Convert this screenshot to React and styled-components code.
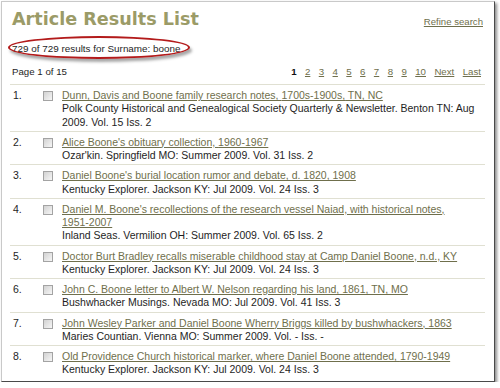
import React from 'react';
import styled, { createGlobalStyle } from 'styled-components';

const GlobalStyle = createGlobalStyle`
  body {
    margin: 0;
    background: #fff;
    font-family: 'Liberation Sans', Arial, sans-serif;
  }
`;

const Frame = styled.div`
  margin: 1px 0 0 1px;
  height: 379px;
  width: 475px;
  padding: 0 9px 0 8px;
  border: 1px solid #c9c9c9;
  border-right-color: #4a4a4a;
  border-bottom-color: #4a4a4a;
  box-shadow: 2px 2px 3px rgba(0, 0, 0, 0.45);
  background: #fff;
  overflow: hidden;
  color: #1e1e1e;
  font-size: 9.7px;
`;

const Header = styled.div`
  display: flex;
  justify-content: space-between;
  align-items: center;
  padding: 6px 2px 0 2px;
`;

const Title = styled.h1`
  margin: 0;
  font-family: 'DejaVu Sans', Verdana, sans-serif;
  font-weight: bold;
  font-size: 17.6px;
  line-height: 22px;
  color: #9b9b67;
`;

const Link = styled.a`
  color: #6f6f4c;
  text-decoration: underline;
  cursor: pointer;
`;

const RefineLink = styled(Link)`
  padding-top: 4px;
  font-size: 9.6px;
`;

const Summary = styled.div`
  position: relative;
  margin: 12px 0 0 2px;
  line-height: 13px;
  font-size: 9.9px;
`;

const Ellipse = styled.span`
  position: absolute;
  left: -4px;
  top: -6px;
  width: 178px;
  height: 19px;
  border: 2px solid #b31b1b;
  border-radius: 50%;
  box-shadow: 2px 3px 3px rgba(0, 0, 0, 0.35);
  pointer-events: none;
`;

const PagerRow = styled.div`
  display: flex;
  justify-content: space-between;
  align-items: center;
  margin-top: 10px;
  padding: 0 4px 0 2px;
  line-height: 13px;
  height: 13px;
`;

const Pages = styled.div`
  display: flex;
  gap: 8.4px;
`;

const Current = styled.span`
  font-weight: bold;
  color: #111;
`;

const List = styled.ol`
  list-style: none;
  margin: 6px 0 0;
  padding: 0;
  font-size: 10.5px;
`;

const Row = styled.li`
  display: grid;
  grid-template-columns: 33px 19px 1fr;
  border-top: 1px solid #e0e0d2;
  padding: 4px 0 2px;
  line-height: 13.25px;
`;

const Num = styled.span`
  padding-left: 3px;
`;

const Check = styled.span`
  width: 8px;
  height: 8px;
  margin-top: 2px;
  border: 1px solid #a3a3a3;
  background: linear-gradient(135deg, #d2d2d2, #f6f6f6);
`;

const Body = styled.div``;

const NoBreak = styled.span`
  white-space: nowrap;
`;

const results = [
  ['Dunn, Davis and Boone family research notes, 1700s-1900s, TN, NC', 'Polk County Historical and Genealogical Society Quarterly & Newsletter. Benton TN: Aug 2009. Vol. 15 Iss. 2'],
  ["Alice Boone's obituary collection, 1960-1967", "Ozar'kin. Springfield MO: Summer 2009. Vol. 31 Iss. 2"],
  ["Daniel Boone's burial location rumor and debate, d. 1820, 1908", 'Kentucky Explorer. Jackson KY: Jul 2009. Vol. 24 Iss. 3'],
  ["Daniel M. Boone's recollections of the research vessel Naiad, with historical notes, 1951-2007", 'Inland Seas. Vermilion OH: Summer 2009. Vol. 65 Iss. 2'],
  ['Doctor Burt Bradley recalls miserable childhood stay at Camp Daniel Boone, n.d., KY', 'Kentucky Explorer. Jackson KY: Jul 2009. Vol. 24 Iss. 3'],
  ['John C. Boone letter to Albert W. Nelson regarding his land, 1861, TN, MO', 'Bushwhacker Musings. Nevada MO: Jul 2009. Vol. 41 Iss. 3'],
  ['John Wesley Parker and Daniel Boone Wherry Briggs killed by bushwhackers, 1863', 'Maries Countian. Vienna MO: Summer 2009. Vol. - Iss. -'],
  ['Old Providence Church historical marker, where Daniel Boone attended, 1790-1949', 'Kentucky Explorer. Jackson KY: Jul 2009. Vol. 24 Iss. 3'],
];

const pageLinks = ['2', '3', '4', '5', '6', '7', '8', '9', '10', 'Next', 'Last'];

// keep year ranges like 1951-2007 on one line
const keepRanges = (text) =>
  text.split(/(\S+-\S+)/).map((part, i) =>
    i % 2 ? <NoBreak key={i}>{part}</NoBreak> : part
  );

export default function App() {
  return (
    <>
      <GlobalStyle />
      <Frame>
        <Header>
          <Title>Article Results List</Title>
          <RefineLink>Refine search</RefineLink>
        </Header>
        <Summary>
          729 of 729 results for Surname: boone
          <Ellipse />
        </Summary>
        <PagerRow>
          <span>Page 1 of 15</span>
          <Pages>
            <Current>1</Current>
            {pageLinks.map((p) => (
              <Link key={p}>{p}</Link>
            ))}
          </Pages>
        </PagerRow>
        <List>
          {results.map(([title, source], i) => (
            <Row key={i}>
              <Num>{i + 1}.</Num>
              <Check />
              <Body>
                <Link>{keepRanges(title)}</Link>
                <div>{source}</div>
              </Body>
            </Row>
          ))}
        </List>
      </Frame>
    </>
  );
}
